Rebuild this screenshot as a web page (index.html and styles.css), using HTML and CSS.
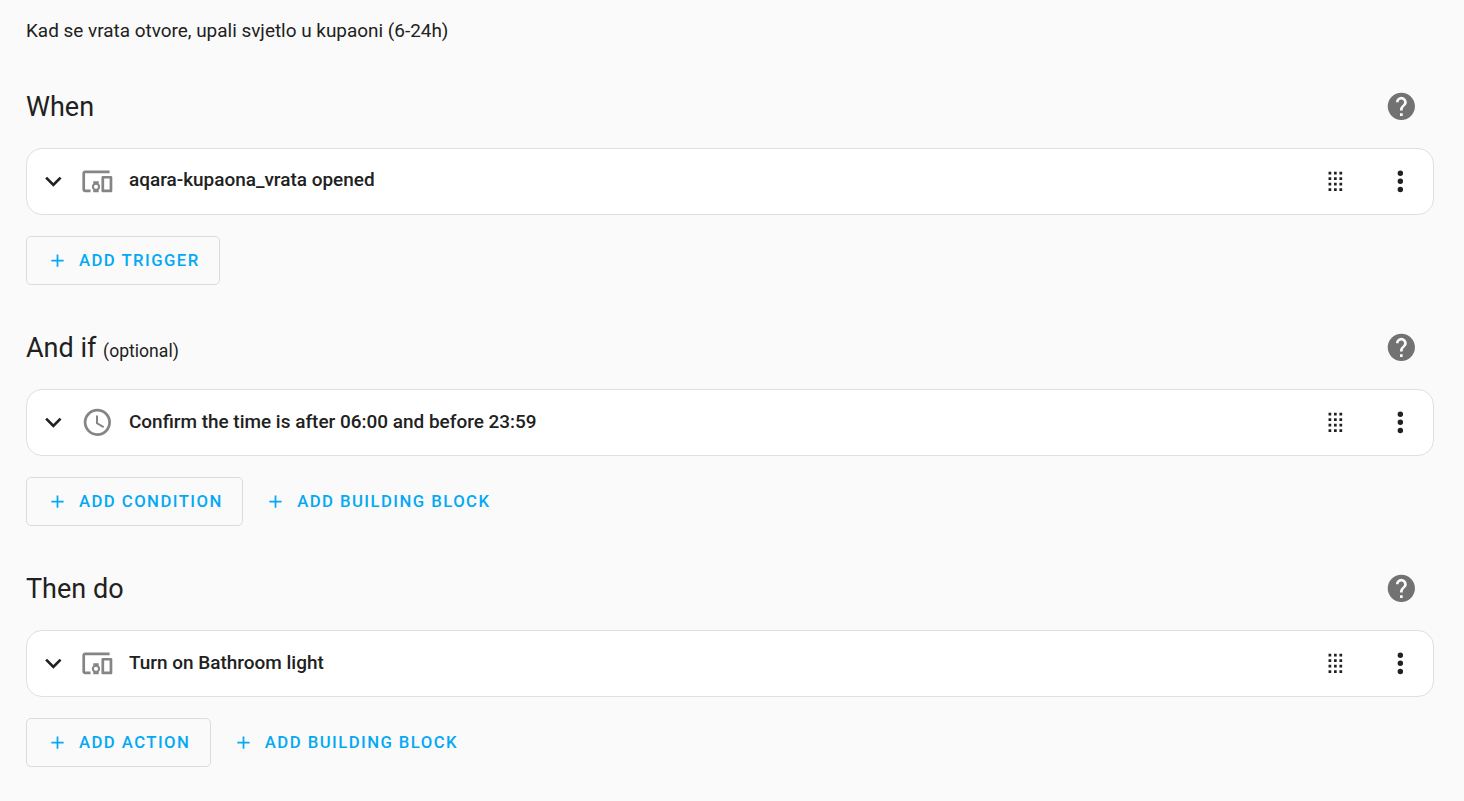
FILE: index.html
```html
<!DOCTYPE html>
<html lang="en">
<head>
    <meta charset="UTF-8">
    <meta name="viewport" content="width=device-width, initial-scale=1.0">
    <title>Automation Editor</title>
    <link rel="stylesheet" href="styles.css">
</head>
<body>
    <!-- Shared icons -->
    <svg class="icon-defs" xmlns="http://www.w3.org/2000/svg">
        <symbol id="chevron" viewBox="0 0 24 24"><path d="M7.41,8.58L12,13.17L16.59,8.58L18,10L12,16L6,10L7.41,8.58Z"/></symbol>
        <symbol id="devices" viewBox="0 0 24 24"><path d="M3 6H21V4H3C1.9 4 1 4.9 1 6V18C1 19.1 1.9 20 3 20H7V18H3V6M13 12H9V13.78C8.39 14.33 8 15.11 8 16C8 16.89 8.39 17.67 9 18.22V20H13V18.22C13.61 17.67 14 16.88 14 16S13.61 14.33 13 13.78V12M11 17.5C10.17 17.5 9.5 16.83 9.5 16S10.17 14.5 11 14.5 12.5 15.17 12.5 16 11.83 17.5 11 17.5M22 8H16C15.5 8 15 8.5 15 9V19C15 19.5 15.5 20 16 20H22C22.5 20 23 19.5 23 19V9C23 8.5 22.5 8 22 8M21 18H17V10H21V18Z"/></symbol>
        <symbol id="clock" viewBox="0 0 24 24"><path d="M12,20A8,8 0 0,0 20,12A8,8 0 0,0 12,4A8,8 0 0,0 4,12A8,8 0 0,0 12,20M12,2A10,10 0 0,1 22,12A10,10 0 0,1 12,22C6.47,22 2,17.5 2,12A10,10 0 0,1 12,2M12.5,7V12.25L17,14.92L16.25,16.15L11,13V7H12.5Z"/></symbol>
        <symbol id="help" viewBox="0 0 24 24"><path d="M15.07,11.25L14.17,12.17C13.45,12.89 13,13.5 13,15H11V14.5C11,13.39 11.45,12.39 12.17,11.67L13.41,10.41C13.78,10.05 14,9.55 14,9C14,7.89 13.1,7 12,7A2,2 0 0,0 10,9H8A4,4 0 0,1 12,5A4,4 0 0,1 16,9C16,9.88 15.64,10.67 15.07,11.25M13,19H11V17H13M12,2A10,10 0 0,0 2,12A10,10 0 0,0 12,22A10,10 0 0,0 22,12C22,6.47 17.5,2 12,2Z"/></symbol>
        <symbol id="drag" viewBox="0 0 24 24"><path d="M7 5h2v2H7zM11 5h2v2h-2zM15 5h2v2h-2zM7 9h2v2H7zM11 9h2v2h-2zM15 9h2v2h-2zM7 13h2v2H7zM11 13h2v2h-2zM15 13h2v2h-2zM7 17h2v2H7zM11 17h2v2h-2zM15 17h2v2h-2z"/></symbol>
        <symbol id="dots" viewBox="0 0 24 24"><path d="M12,16A2,2 0 0,1 14,18A2,2 0 0,1 12,20A2,2 0 0,1 10,18A2,2 0 0,1 12,16M12,10A2,2 0 0,1 14,12A2,2 0 0,1 12,14A2,2 0 0,1 10,12A2,2 0 0,1 12,10M12,4A2,2 0 0,1 14,6A2,2 0 0,1 12,8A2,2 0 0,1 10,6A2,2 0 0,1 12,4Z"/></symbol>
        <symbol id="plus" viewBox="0 0 24 24"><path d="M19,13H13V19H11V13H5V11H11V5H13V11H19V13Z"/></symbol>
    </svg>

    <p class="description">Kad se vrata otvore, upali svjetlo u kupaoni (6-24h)</p>

    <!-- Triggers -->
    <section>
        <div class="header">
            <h2>When</h2>
            <svg class="icon help"><use href="#help"/></svg>
        </div>
        <div class="card">
            <svg class="icon"><use href="#chevron"/></svg>
            <svg class="icon type"><use href="#devices"/></svg>
            <h3>aqara-kupaona_vrata opened</h3>
            <svg class="icon drag"><use href="#drag"/></svg>
            <svg class="icon"><use href="#dots"/></svg>
        </div>
        <div class="buttons">
            <button class="outlined"><svg class="plus"><use href="#plus"/></svg><span>Add trigger</span></button>
        </div>
    </section>

    <!-- Conditions -->
    <section>
        <div class="header">
            <h2>And if <span class="small">(optional)</span></h2>
            <svg class="icon help"><use href="#help"/></svg>
        </div>
        <div class="card">
            <svg class="icon"><use href="#chevron"/></svg>
            <svg class="icon type"><use href="#clock"/></svg>
            <h3>Confirm the time is after 06:00 and before 23:59</h3>
            <svg class="icon drag"><use href="#drag"/></svg>
            <svg class="icon"><use href="#dots"/></svg>
        </div>
        <div class="buttons">
            <button class="outlined"><svg class="plus"><use href="#plus"/></svg><span>Add condition</span></button>
            <button><svg class="plus"><use href="#plus"/></svg><span>Add building block</span></button>
        </div>
    </section>

    <!-- Actions -->
    <section>
        <div class="header">
            <h2>Then do</h2>
            <svg class="icon help"><use href="#help"/></svg>
        </div>
        <div class="card">
            <svg class="icon"><use href="#chevron"/></svg>
            <svg class="icon type"><use href="#devices"/></svg>
            <h3>Turn on Bathroom light</h3>
            <svg class="icon drag"><use href="#drag"/></svg>
            <svg class="icon"><use href="#dots"/></svg>
        </div>
        <div class="buttons">
            <button class="outlined"><svg class="plus"><use href="#plus"/></svg><span>Add action</span></button>
            <button><svg class="plus"><use href="#plus"/></svg><span>Add building block</span></button>
        </div>
    </section>
</body>
</html>
```
FILE: styles.css
```css
* {
    box-sizing: border-box;
}

body {
    margin: 0;
    padding: 0 30px 0 26px;
    background: #fafafa;
    color: #212121;
    font-family: Roboto, sans-serif;
}

.icon-defs {
    display: none;
}

.description {
    margin: 0;
    height: 64px;
    padding-top: 18px;
    font-size: 18.93px;
    line-height: 25px;
}

section {
    margin-bottom: 20.1px;
}

/* Section title with the help icon */
.header {
    display: flex;
    align-items: center;
    justify-content: space-between;
    height: 84px;
    padding-right: 16.5px;
}

h2 {
    margin: 2px 0 0;
    font-size: 27px;
    font-weight: 400;
    line-height: 38px;
}

.small {
    font-size: 17.6px;
    line-height: 1;
}

.icon {
    flex: none;
    width: 32.7px;
    height: 32.7px;
    fill: #212121;
}

.help {
    fill: #727272;
}

/* Trigger, condition and action rows */
.card {
    display: flex;
    align-items: center;
    height: 67px;
    padding: 0 16.5px 0 10px;
    background: #fff;
    border: 1px solid #e0e0e0;
    border-radius: 16px;
}

.type {
    margin-left: 11px;
    fill: #858585;
}

h3 {
    flex: 1;
    margin: 0 0 2.1px 15.6px;
    font-size: 18.97px;
    font-weight: 500;
    line-height: 26px;
}

.drag {
    margin-right: 32.3px;
}

/* Buttons under each row */
.buttons {
    display: flex;
    gap: 1px;
    margin-top: 21px;
}

button {
    display: flex;
    align-items: center;
    height: 49px;
    padding: 0 11px 1px 20px;
    border: 1px solid transparent;
    border-radius: 5px;
    background: none;
    color: #03a9f4;
    font-family: Roboto, sans-serif;
    font-size: 16.7px;
    font-weight: 500;
    letter-spacing: 1.45px;
    text-transform: uppercase;
}

.outlined {
    padding-right: 19.5px;
    border-color: #dcdcdc;
}

.plus {
    width: 21px;
    height: 21px;
    margin: 1px 11px 0 0;
    fill: #03a9f4;
}
```
